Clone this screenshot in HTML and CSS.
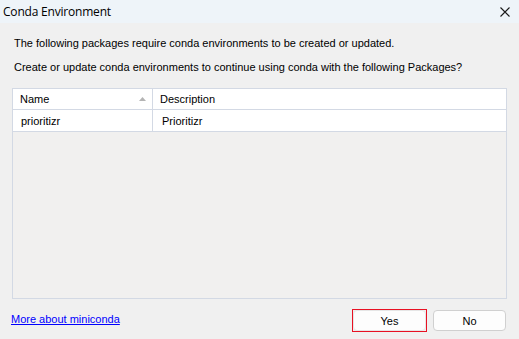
FILE: index.html
```html
<!doctype html>
<html lang="en">
    <head>
        <meta charset="UTF-8" />
        <title>Conda Environment</title>
        <link rel="stylesheet" href="styles.css">
    </head>
    <body>
        <div class="dialog">
            <div class="titlebar">
                <span class="title">Conda Environment</span>
                <svg class="close-icon" viewBox="0 0 10 10" xmlns="http://www.w3.org/2000/svg">
                    <path d="M0.5 0.5 L9.5 9.5 M9.5 0.5 L0.5 9.5" />
                </svg>
            </div>

            <div class="content">
                <p class="message">The following packages require conda environments to be created or updated.</p>
                <p class="message">Create or update conda environments to continue using conda with the following Packages?</p>

                <div class="list">
                    <div class="list-header">
                        <div class="col col-name">
                            <span>Name</span>
                            <svg class="sort-icon" viewBox="0 0 7 4" xmlns="http://www.w3.org/2000/svg">
                                <path d="M3.5 0 L7 4 L0 4 Z" />
                            </svg>
                        </div>
                        <div class="col col-desc">Description</div>
                    </div>
                    <div class="list-row">
                        <div class="col col-name">prioritizr</div>
                        <div class="col col-desc">Prioritizr</div>
                    </div>
                </div>

                <div class="footer">
                    <a href="#" class="link">More about miniconda</a>
                    <div class="buttons">
                        <span class="focus-ring">
                            <button class="button">Yes</button>
                        </span>
                        <button class="button">No</button>
                    </div>
                </div>
            </div>
        </div>
    </body>
</html>
```

FILE: styles.css
```css
*,
*::before,
*::after {
    margin: 0;
    padding: 0;
    box-sizing: border-box;
}

:root {
    --body-bg: #f0f0f0;
    --title-bg: #eef4f9;
    --grid-line: #d3d9e4;
    --text-color: #000;
}

body {
    font-family: "Liberation Sans", Arial, sans-serif;
    font-size: 11px;
    color: var(--text-color);
    background: var(--body-bg);
}

.dialog {
    width: 519px;
    height: 339px;
    display: flex;
    flex-direction: column;
}

.titlebar {
    height: 23px;
    background: var(--title-bg);
    display: flex;
    align-items: center;
    justify-content: space-between;
    padding: 0 9px 0 3px;
}

.title {
    font-family: "Open Sans", "Noto Sans", sans-serif;
    font-size: 12px;
    letter-spacing: -0.2px;
}

.close-icon {
    width: 10px;
    height: 10px;
    stroke: #1a1a1a;
    stroke-width: 1.1;
    fill: none;
}

.content {
    flex: 1;
    display: flex;
    flex-direction: column;
    padding: 14px 12px 7px 12px;
}

.message {
    height: 12px;
    line-height: 12px;
    padding-left: 2px;
    margin-bottom: 12px;
}

.list {
    margin-top: 3px;
    height: 211px;
    border: 1px solid var(--grid-line);
    background: #f1f0ef;
}

.list-header,
.list-row {
    display: flex;
    height: 21px;
    background: #fff;
    border-bottom: 1px solid var(--grid-line);
}

.list-row {
    height: 22px;
}

.col {
    display: flex;
    align-items: center;
}

.col-name {
    width: 140px;
    padding: 0 6px 0 7px;
    border-right: 1px solid var(--grid-line);
    justify-content: space-between;
}

.col-desc {
    flex: 1;
    padding-left: 7px;
}

.list-row .col-name {
    padding-left: 8px;
}

.list-row .col-desc {
    padding-left: 9px;
}

.sort-icon {
    width: 7px;
    height: 4px;
    fill: #b4b4b4;
}

.footer {
    flex: 1;
    display: flex;
    align-items: flex-end;
    justify-content: space-between;
    padding-right: 1px;
}

.link {
    margin-left: -1px;
    margin-bottom: 7px;
    color: #0000ff;
    text-decoration: underline;
}

.buttons {
    display: flex;
    align-items: center;
    gap: 6px;
}

.focus-ring {
    display: flex;
    border: 1px solid #e81123;
}

.button {
    width: 73px;
    height: 21px;
    font-family: "Liberation Sans", Arial, sans-serif;
    font-size: 11px;
    color: #000;
    background: #fdfdfd;
    border: 1px solid #d0d0d0;
    border-radius: 4px;
}

.focus-ring .button {
    border-color: #e6e6e6;
}
```
